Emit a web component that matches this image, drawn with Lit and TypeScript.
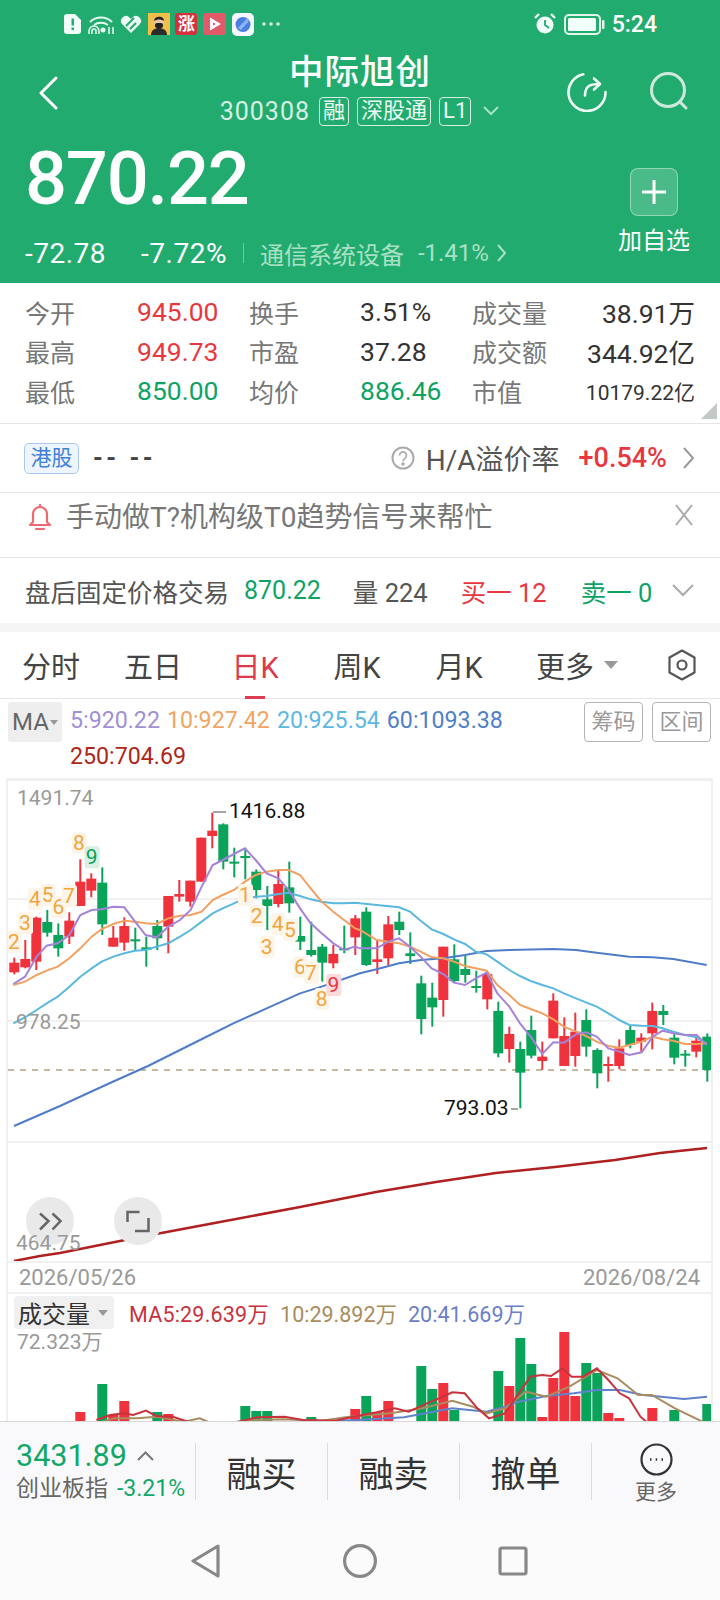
import { LitElement, html, css, svg } from 'lit';
import { customElement } from 'lit/decorators.js';

const RED = '#f0323c';
const GREEN = '#0aa35a';

// candle x position for a given index
const cx = (i: number) => 14.3 + 11 * i;

// [colour, wick top, body top, body bottom, wick bottom], read off the chart
type Candle = [string, number, number, number, number];

const leftCandles: Candle[] = [
  ['r', 533, 548, 577, 583], ['r', 480, 537, 562, 565], ['r', 410, 413, 545, 570], ['g', 390, 426, 458, 470],
  ['g', 430, 465, 505, 530], ['r', 397, 422, 470, 492], ['r', 238, 305, 378, 378], ['r', 280, 296, 332, 352],
  ['g', 262, 308, 433, 465], ['r', 438, 473, 500, 500], ['r', 412, 438, 488, 512], ['g', 443, 478, 482, 512],
  ['g', 470, 502, 510, 560], ['g', 420, 438, 475, 510], ['r', 348, 348, 440, 520], ['r', 300, 342, 350, 365],
  ['r', 302, 302, 365, 380], ['r', 173, 173, 305, 305], ['r', 98, 152, 168, 205], ['g', 130, 133, 245, 268],
  ['g', 203, 245, 250, 292], ['g', 205, 228, 232, 298], ['g', 268, 275, 330, 355], ['g', 318, 358, 378, 450],
  ['r', 272, 312, 372, 382], ['g', 245, 322, 370, 398], ['g', 410, 468, 485, 510], ['g', 425, 510, 525, 530],
  ['g', 492, 500, 548, 605], ['r', 495, 522, 550, 565], ['g', 437, 505, 510, 520], ['r', 405, 415, 472, 525],
];

const rightCandles: Candle[] = [
  ['g', 22, 35, 195, 198], ['r', 120, 178, 186, 222], ['r', 48, 73, 175, 195], ['g', 35, 65, 90, 105],
  ['g', 97, 160, 168, 192], ['g', 227, 250, 357, 403], ['g', 248, 293, 322, 380], ['r', 140, 140, 300, 350],
  ['g', 133, 178, 243, 248], ['g', 167, 207, 225, 248], ['g', 212, 258, 264, 278], ['r', 215, 222, 298, 328],
  ['g', 305, 333, 460, 472], ['r', 380, 402, 447, 488], ['g', 425, 447, 518, 625], ['g', 347, 390, 467, 475],
  ['r', 425, 470, 483, 510], ['r', 280, 302, 415, 415], ['r', 352, 408, 498, 498], ['r', 338, 395, 468, 500],
  ['g', 328, 360, 440, 470], ['g', 445, 450, 520, 565], ['r', 470, 492, 498, 545], ['r', 418, 445, 498, 508],
  ['g', 378, 390, 435, 445], ['r', 400, 413, 425, 455], ['r', 308, 333, 400, 448], ['g', 315, 333, 345, 375],
  ['g', 400, 413, 473, 493], ['g', 450, 461, 466, 500], ['r', 410, 422, 455, 472], ['g', 400, 410, 510, 545],
];

const candles: { c: string; t: number; bt: number; bb: number; b: number }[] = [
  ...leftCandles.map(([c, t, bt, bb, b]) => ({ c, t: 780 + t / 3, bt: 780 + bt / 3, bb: 780 + bb / 3, b: 780 + b / 3 })),
  ...rightCandles.map(([c, t, bt, bb, b]) => ({ c, t: 900 + t / 3, bt: 900 + bt / 3, bb: 900 + bb / 3, b: 900 + b / 3 })),
];

const ptsL = (a: number[][]) => a.map(([x, y]) => `${x / 3},${780 + y / 3}`).join(' ');
const ptsR = (a: number[][]) => a.map(([x, y]) => `${360 + x / 3},${900 + y / 3}`).join(' ');

const ma5 = ptsL([[40,612],[75,590],[110,530],[140,497],[173,490],[208,465],[241,405],[275,390],[305,388],[340,380],[373,382],[405,425],[437,465],[470,472],[505,440],[540,420],[572,390],[605,320],[638,255],[668,240],[702,222],[735,205],[767,240],[800,280],[835,295],[866,330],[900,385],[932,430],[965,460],[1000,490],[1032,510],[1065,500]])
  + ' ' + ptsR([[0,145],[50,145],[85,125],[117,115],[150,140],[182,170],[215,205],[250,222],[282,248],[315,255],[347,235],[380,218],[412,280],[448,320],[480,370],[512,410],[547,462],[580,427],[612,428],[648,403],[678,397],[710,410],[745,445],[778,455],[808,465],[845,457],[878,410],[908,392],[940,400],[975,405],[1010,405],[1040,435]]);

const ma10 = ptsL([[40,615],[75,605],[110,585],[140,572],[173,560],[208,535],[241,505],[275,470],[305,447],[340,432],[373,422],[405,425],[437,430],[470,432],[505,415],[540,407],[572,405],[605,395],[638,360],[668,345],[702,330],[735,305],[767,285],[800,275],[835,270],[866,270],[900,285],[932,325],[965,365],[1000,395],[1032,420],[1065,445]])
  + ' ' + ptsR([[0,90],[50,120],[85,125],[117,130],[150,140],[182,155],[215,172],[250,175],[282,185],[315,198],[347,205],[380,212],[412,255],[448,285],[480,315],[512,327],[547,340],[580,358],[612,380],[648,395],[678,408],[710,425],[745,438],[778,443],[808,435],[845,425],[878,410],[908,418],[940,422],[975,432],[1010,432],[1040,430]]);

const ma20 = ptsL([[40,730],[75,712],[110,690],[140,670],[173,650],[208,620],[241,590],[275,565],[305,545],[340,530],[373,520],[405,512],[437,510],[470,500],[505,490],[540,470],[572,450],[605,425],[638,400],[668,385],[702,370],[735,355],[767,350],[800,348],[835,342],[866,338],[900,348],[932,358],[965,365],[1000,370],[1032,370],[1065,368]])
  + ' ' + ptsR([[0,10],[50,15],[117,22],[150,35],[182,62],[215,88],[250,102],[282,118],[315,132],[347,155],[380,163],[412,185],[448,210],[480,228],[512,243],[547,255],[580,265],[612,280],[648,295],[678,307],[710,320],[745,340],[778,360],[808,375],[845,377],[878,378],[908,385],[940,395],[975,405],[1010,412],[1040,432]]);

const ma60 = '14,1126 60,1106 110,1083 148,1066 202,1039 ' + ptsL([[700,730],[800,685],[900,640],[965,620],[1080,580]])
  + ' ' + ptsR([[0,220],[50,208],[117,190],[182,180],[250,175],[315,165],[380,153],[448,150],[580,147],[648,150],[710,158],[808,170],[878,172],[940,177],[1040,195]]);

const ma250 = '14,1261 40,1256 60,1253 140,1237 220,1222 300,1207 376,1192 436,1182 496,1173 555,1167 615,1160 660,1153 707,1148';

// TD sequence marks: [text, x, y, tone]
const marks: [string, number, number, string][] = [
  ['2',42,485,'o'],['3',75,430,'o'],['4',105,358,'o'],['5',143,345,'o'],['6',175,382,'o'],['7',207,348,'o'],['8',237,190,'o'],['9',275,232,'g'],
  ['1',735,345,'o'],['2',770,408,'o'],['3',800,500,'o'],['4',833,432,'o'],['5',870,450,'o'],['6',900,562,'o'],['7',933,578,'o'],['8',965,657,'o'],['9',1000,615,'r'],
];

// volume bars, index + top in real pixels
const bars: [number, string, number][] = [
  [6,'r',1412],[8,'g',1384],[9,'r',1415],[10,'r',1401],[13,'g',1412],[14,'r',1414],[21,'g',1406],[22,'g',1411],[23,'g',1411],[27,'g',1417],
  [31,'r',1409],[32,'g',1396],[33,'r',1412],[34,'r',1401],[37,'g',1366],[38,'g',1389],[39,'r',1383],[40,'g',1410],[44,'g',1371],[45,'r',1386],
  [46,'g',1338],[47,'g',1364],[48,'r',1417],[49,'r',1378],[50,'r',1332],[51,'r',1396],[52,'g',1363],[53,'g',1373],[54,'r',1413],[55,'r',1418],
  [58,'r',1408],[60,'g',1410],[63,'g',1404],
];

const ptsV = (a: number[][]) => a.map(([x, y]) => `${x / 2.178},${1160 + y / 3}`).join(' ');
const volMa5 = ptsV([[210,780],[240,765],[270,760],[290,765],[318,752],[340,768],[380,772],[420,790],[520,785],[560,772],[620,770],[660,780],[730,782],[770,770],[820,757],[860,745],[890,755],[930,730],[965,710],[985,697],[1012,700],[1040,745],[1065,775],[1100,760],[1130,700],[1155,650],[1180,645],[1200,648],[1225,625],[1245,650],[1270,650],[1300,625],[1325,660],[1350,700],[1370,715],[1395,770],[1420,800]]);
const volMa10 = ptsV([[210,790],[250,775],[300,775],[340,770],[400,785],[435,775],[470,795],[540,780],[620,778],[700,782],[760,770],[850,760],[920,745],[985,722],[1030,740],[1060,760],[1100,745],[1145,695],[1190,710],[1240,680],[1300,630],[1345,655],[1390,705],[1420,705],[1470,745],[1530,785]]);
const volMa20 = ptsV([[560,790],[640,785],[780,780],[880,772],[985,745],[1060,755],[1100,740],[1130,725],[1190,708],[1250,700],[1300,690],[1350,690],[1400,705],[1490,717],[1540,710]]);

const stats = [
  ['今开', '945.00', 'up', '换手', '3.51%', '', '成交量', '38.91万', ''],
  ['最高', '949.73', 'up', '市盈', '37.28', '', '成交额', '344.92亿', ''],
  ['最低', '850.00', 'down', '均价', '886.46', 'down', '市值', '10179.22亿', 'small'],
];

@customElement('app-root')
export class AppRoot extends LitElement {
  static styles = css`
    :host {
      display: block;
      width: 720px;
      height: 1600px;
      overflow: hidden;
      background: #fff;
      color: #333;
      font-family: Roboto, "Noto Sans CJK SC", sans-serif;
    }

    /* header */
    .head { background: #22ab6e; color: #fff; height: 283px; }
    .status { height: 48px; display: flex; align-items: center; padding: 0 63px 0 64px; }
    .status-left { display: flex; align-items: center; gap: 5.600px; flex: 1; }
    .status-right { display: flex; align-items: center; gap: 8px; }
    .app-ic { width: 22px; height: 22px; display: flex; align-items: center; justify-content: center; border-radius: 3px; }
    .zhang { background: #d6303d; font-size: 17px; font-weight: 700; line-height: 22px; }
    .time { font-size: 23px; font-weight: 500; margin-left: -1px; }

    .nav { height: 82px; display: grid; grid-template-columns: 1fr auto 1fr; }
    .back { padding: 28px 0 0 38px; }
    .mid { display: flex; flex-direction: column; align-items: center; padding-top: 3px; }
    .name { font-size: 34.500px; line-height: 42px; font-weight: 500; letter-spacing: 1px; }
    .code-row { display: flex; align-items: center; gap: 8px; height: 34px; margin-top: 1px; }
    .code { font-size: 25px; letter-spacing: 1px; color: #d6f0e3; margin-right: 1px; }
    .tag { border: 1px solid #d6f0e3; border-radius: 4px; height: 27px; padding: 0 3px; font-size: 22px; line-height: 26px; color: #eafaf2; }
    .actions { display: flex; justify-content: flex-end; gap: 43px; padding: 24px 30px 0 0; align-items: flex-start; }

    .quote { height: 153px; box-sizing: border-box; padding: 2px 30px 0 25px; display: flex; justify-content: space-between; }
    .price { font-size: 74px; line-height: 94px; font-weight: 500; letter-spacing: -1.200px; }
    .delta { display: flex; align-items: center; height: 28px; margin-top: 13px; font-size: 28px; }
    .delta .num { letter-spacing: 0.500px; }
    .delta .pct { margin-left: 35px; }
    .delta .sep { width: 1px; height: 20px; background: rgba(255, 255, 255, 0.35); margin: 0 16px; }
    .delta .sector { font-size: 24px; color: #a9e0c6; }
    .delta .sector-pct { font-size: 24px; color: #a9e0c6; margin: 0 7px 0 14px; }
    .add { display: flex; flex-direction: column; align-items: center; padding-top: 36px; width: 72px; }
    .add-btn {
      width: 48px; height: 48px; box-sizing: border-box; border: 1px solid rgba(255, 255, 255, 0.4); border-radius: 8px;
      background: rgba(255, 255, 255, 0.18); display: flex; align-items: center; justify-content: center;
    }
    .add-label { font-size: 24px; line-height: 30px; margin-top: 10px; white-space: nowrap; }

    /* stats */
    .stats {
      position: relative; height: 141px; padding: 9px 25px 0; box-sizing: border-box;
      display: grid; grid-template-columns: 112px 112px 111px 112px 90px 1fr; grid-auto-rows: 39.500px; align-items: center;
      font-size: 26.500px; border-bottom: 1px solid #e6e6e6;
    }
    .lbl { color: #777; font-size: 25px; white-space: nowrap; }
    .val { color: #333; }
    .up { color: #e8373f; }
    .down { color: #0ea365; }
    .end { text-align: right; white-space: nowrap; }
    .small { font-size: 21px; }
    .corner {
      position: absolute; right: 3px; bottom: 4px; width: 0; height: 0;
      border-left: 16px solid transparent; border-bottom: 16px solid #c4c8c8;
    }

    .hk { height: 68px; display: flex; align-items: center; padding: 0 25px 0 24px; border-bottom: 1px solid #e6e6e6; }
    .hk-chip {
      width: 55px; height: 31px; box-sizing: border-box; border: 1px solid #a9c8ee; border-radius: 5px; background: #eef5fe;
      color: #3f80d8; font-size: 21px; line-height: 29px; text-align: center;
    }
    .dash { margin-left: 14px; font-size: 25px; font-weight: 700; letter-spacing: 3.500px; color: #444; flex: 1; }
    .ha { font-size: 28px; color: #555; margin: 0 19px 0 11px; }
    .prem { font-size: 27px; font-weight: 500; color: #e8373f; margin-right: 15px; }

    .promo { height: 65px; display: flex; padding: 11px 27px 0 28px; box-sizing: border-box; border-bottom: 1px solid #e6e6e6; }
    .promo-text { font-size: 28px; line-height: 27px; margin-left: 14px; color: #777; flex: 1; }

    .trade { height: 65px; display: flex; align-items: center; padding: 0 26px 0 25px; font-size: 25.500px; color: #555; box-sizing: border-box; }
    .trade .price-t { margin-left: 15px; font-size: 25px; }
    .trade .vol { margin-left: 32px; }
    .trade .buy { margin-left: 33px; }
    .trade .sell { margin-left: 34px; flex: 1; }

    .band { height: 9px; background: #f5f5f5; }

    /* period tabs */
    .tabs {
      height: 67px; box-sizing: border-box; border-bottom: 1px solid #e6e6e6;
      display: grid; grid-template-columns: repeat(5, 102px) 102px 1fr; grid-template-rows: 100%; font-size: 29px; color: #444;
    }
    .tab { display: flex; align-items: center; justify-content: center; position: relative; white-space: nowrap; }
    .tab.active { color: #e0384a; }
    .tab.active::after { content: ""; position: absolute; left: 41px; width: 20px; bottom: -1px; height: 3px; background: #dc3c55; }
    .tab.more { justify-content: flex-start; padding-left: 26px; gap: 10px; }
    .caret { width: 0; height: 0; border-left: 7px solid transparent; border-right: 7px solid transparent; border-top: 8px solid #999; }
    .tab-set { display: flex; align-items: center; justify-content: flex-end; padding-right: 24px; }

    /* MA legend */
    .ma { height: 79px; display: flex; padding: 3px 9px 0 8px; box-sizing: border-box; }
    .ma-chip {
      width: 54px; height: 40px; background: #eee; border-radius: 3px; color: #666; font-size: 24px; flex: none;
      display: flex; align-items: center; justify-content: center; gap: 1px;
    }
    .ma-chip .caret { border-left-width: 4px; border-right-width: 4px; border-top-width: 5px; }
    .legend { flex: 1; display: flex; flex-wrap: wrap; align-content: flex-start; gap: 0 7px; margin-left: 8px; font-size: 23.200px; line-height: 36px; }
    .box-btns { display: flex; gap: 9px; }
    .box-btn {
      width: 59px; height: 40px; box-sizing: border-box; border: 1px solid #b4b4b4; border-radius: 4px;
      color: #999; font-size: 22px; line-height: 38px; text-align: center;
    }

    /* charts */
    .frame { margin: 0 7px 0 6px; border: 2px solid #f0f0f0; border-top-width: 3px; border-bottom: 0; height: 640px; overflow: hidden; }
    svg.plot { display: block; width: 703px; }
    svg.plot text { font-family: Roboto, "Noto Sans CJK SC", sans-serif; }
    .dates {
      height: 33px; box-sizing: border-box; border-top: 2px solid #f0f0f0; border-bottom: 2px solid #f0f0f0;
      display: flex; justify-content: space-between; align-items: center; padding: 0 11px; color: #999; font-size: 22px;
    }
    .vol-head { height: 37px; display: flex; align-items: center; padding-left: 6px; font-size: 21.500px; }
    .vol-chip {
      width: 100px; height: 33px; box-sizing: border-box; background: #f0f0f0; border-radius: 4px; color: #333; font-size: 24px;
      display: flex; align-items: center; padding-left: 4px; gap: 8px; margin-right: 15px; flex: none;
    }
    .vol-chip .caret { border-left-width: 5px; border-right-width: 5px; border-top-width: 6px; }
    .vol-head span.v { margin-right: 11px; white-space: nowrap; }
    .vol-head span.wide { letter-spacing: 0.200px; }

    /* bottom bar */
    .bar { height: 100px; box-sizing: border-box; background: #f9f9fb; border-top: 1px solid #d8d8d8; display: flex; align-items: center; }
    .index { width: 195px; box-sizing: border-box; padding: 0 0 0 16px; }
    .index-top { display: flex; align-items: center; gap: 10px; font-size: 30.500px; line-height: 34px; color: #10a868; }
    .index-sub { display: flex; align-items: center; gap: 9px; font-size: 23px; line-height: 32px; color: #666; }
    .index-sub b { font-weight: 400; font-size: 23px; color: #10a868; }
    .act { width: 131px; height: 57px; border-left: 1px solid #dcdcdc; display: flex; align-items: center; justify-content: center; font-size: 35px; color: #333; }
    .act-more { flex: 1; height: 57px; border-left: 1px solid #dcdcdc; display: flex; flex-direction: column; align-items: center; font-size: 21px; color: #666; }
    .act-more svg { flex: none; }
    .act-more span { line-height: 26px; margin-top: 3px; }
    .sysnav { height: 79px; background: #fbfbfb; display: flex; align-items: center; justify-content: center; gap: 121px; padding-right: 2px; }
  `;

  private renderKline() {
    return html`
      <svg class="plot" style="height:480px" viewBox="8 781 703 480">
        ${[899, 1021, 1142].map((y) => svg`<line x1="8" x2="711" y1=${y} y2=${y} stroke="#f0f0f0" stroke-width="2"></line>`)}
        <line x1="8" x2="711" y1="1070" y2="1070" stroke="#c9b79f" stroke-width="2" stroke-dasharray="6 6"></line>

        ${candles.map((k, i) => {
          const fill = k.c === 'r' ? RED : GREEN;
          return svg`
            <rect x=${cx(i) - 1} y=${k.t} width="2" height=${k.b - k.t} fill=${fill}></rect>
            <rect x=${cx(i) - 5} y=${k.bt} width="10" height=${Math.max(k.bb - k.bt, 2)} fill=${fill}></rect>`;
        })}

        <polyline points=${ma60} fill="none" stroke="#4f7cc8" stroke-width="2"></polyline>
        <polyline points=${ma20} fill="none" stroke="#5ab8e0" stroke-width="2"></polyline>
        <polyline points=${ma10} fill="none" stroke="#f0a060" stroke-width="2"></polyline>
        <polyline points=${ma5} fill="none" stroke="#a583d9" stroke-width="2"></polyline>
        <polyline points=${ma250} fill="none" stroke="#b02020" stroke-width="2.500"></polyline>

        ${marks.map(([t, x, y, tone]) => {
          const bg = tone === 'g' ? '#d8efe2' : tone === 'r' ? '#fbd9dc' : '#fdf5ea';
          const fg = tone === 'g' ? '#0aa35a' : tone === 'r' ? '#e8373f' : '#f0a63c';
          return svg`
            <rect x=${x / 3 - 7} y=${780 + y / 3 - 11} width="15" height="22" rx="3" fill=${bg}></rect>
            <text x=${x / 3} y=${780 + y / 3 + 7} text-anchor="middle" font-size="21" fill=${fg}>${t}</text>`;
        })}

        <line x1="213" x2="226" y1="812" y2="812" stroke="#888" stroke-width="1.500"></line>
        <text x="229" y="818" font-size="21" fill="#111">1416.88</text>
        <text x="444" y="1115" font-size="21" fill="#111">793.03</text>
        <line x1="511" x2="518" y1="1109" y2="1109" stroke="#888" stroke-width="1.500"></line>

        <text x="17" y="805" font-size="21" fill="#999">1491.74</text>
        <text x="16" y="1029" font-size="21" fill="#999">978.25</text>

        <circle cx="50" cy="1221" r="24" fill="#e9e9e9"></circle>
        <path d="M40 1213.500l8.500 7.500-8.500 8.500M52.500 1213.500l8 7.500-8 8.500" fill="none" stroke="#666" stroke-width="2.500"></path>
        <circle cx="138" cy="1221" r="24" fill="#e9e9e9"></circle>
        <path d="M127.500 1222v-10h12M148.500 1218v13h-13.500" fill="none" stroke="#666" stroke-width="2.500"></path>
        <text x="16" y="1250" font-size="21" fill="#999">464.75</text>
      </svg>`;
  }

  private renderVolume() {
    return html`
      <svg class="plot" style="height:90px" viewBox="8 1331 703 90">
        ${bars.map(([i, c, top]) => svg`<rect x=${cx(i) - 5} y=${top} width="10" height=${1425 - top} fill=${c === 'r' ? RED : GREEN}></rect>`)}
        <polyline points=${volMa20} fill="none" stroke="#5f82cc" stroke-width="2"></polyline>
        <polyline points=${volMa10} fill="none" stroke="#a98c5e" stroke-width="2"></polyline>
        <polyline points=${volMa5} fill="none" stroke="#c8323c" stroke-width="2"></polyline>
        <text x="17" y="1349" font-size="21" fill="#999">72.323万</text>
      </svg>`;
  }

  render() {
    return html`
      <div class="head">
        <div class="status">
          <div class="status-left">
            <svg width="17" height="20" viewBox="0 0 17 20">
              <path d="M3 0h8l6 6v11a3 3 0 0 1-3 3H3a3 3 0 0 1-3-3V3a3 3 0 0 1 3-3z" fill="#f2fff9"></path>
              <rect x="7.500" y="4.500" width="2.500" height="7" fill="#22ab6e"></rect>
              <rect x="7.500" y="13.500" width="2.500" height="2.500" fill="#22ab6e"></rect>
            </svg>
            <svg width="28" height="22" viewBox="0 0 28 22" fill="none" stroke="#e8fbf1" stroke-width="2">
              <path d="M3 9c6-6 16-6 22 0M7 12c4-3 10-3 14 0"></path>
              <path d="M2 21v-3a5 5 0 0 1 10 0v3M5 21v-3a2 2 0 0 1 4 0v3" stroke-width="1.500"></path>
              <circle cx="16" cy="17" r="1.500" fill="#e8fbf1"></circle>
              <path d="M22 14v7M26 14v7" stroke-width="1.500"></path>
            </svg>
            <svg width="22" height="18" viewBox="0 0 22 18">
              <path d="M11 18L2 9a5 5 0 0 1 7-7l2 2 2-2a5 5 0 0 1 7 7z" fill="#eafcf3"></path>
              <path d="M6 11l8-8M10 14l6-6" stroke="#22ab6e" stroke-width="2"></path>
            </svg>
            <svg width="22" height="22" viewBox="0 0 22 22">
              <rect width="22" height="22" fill="#f0c04a"></rect>
              <path d="M3 22c0-5 4-7 8-7s8 2 8 7z" fill="#2c2c2c"></path>
              <circle cx="11" cy="9" r="5" fill="#e8c8a8"></circle>
              <path d="M6 8c0-5 10-6 10 0-3-2-7-2-10 0z" fill="#2a2020"></path>
              <rect x="7" y="10" width="8" height="5" rx="2" fill="#222"></rect>
            </svg>
            <span class="app-ic zhang">涨</span>
            <svg width="23" height="22" viewBox="0 0 23 22">
              <rect width="23" height="22" rx="3" fill="#e05a6a"></rect>
              <path d="M7 4.500l11 6.500-11 6.500zM10 9.500v3l3-1.500z" fill="#fff" fill-rule="evenodd"></path>
            </svg>
            <svg width="22" height="23" viewBox="0 0 22 23">
              <rect width="22" height="23" rx="5" fill="#f4f8ff"></rect>
              <circle cx="11" cy="11.500" r="7.500" fill="#4a7ee0"></circle>
              <path d="M6 15L15 5.500l2 2.500-8 9z" fill="#8fb2f2"></path>
            </svg>
            <svg width="18" height="4" viewBox="0 0 18 4" style="margin-left:3px" fill="#d6f0e3">
              <circle cx="2" cy="2" r="1.800"></circle><circle cx="9" cy="2" r="1.800"></circle><circle cx="16" cy="2" r="1.800"></circle>
            </svg>
          </div>
          <div class="status-right">
            <svg width="22" height="22" viewBox="0 0 22 22">
              <circle cx="11" cy="12" r="8.500" fill="#f2fff9"></circle>
              <path d="M11 7v5l4 3" stroke="#22ab6e" stroke-width="1.800" fill="none"></path>
              <path d="M1 5l4-4M21 5l-4-4" stroke="#f2fff9" stroke-width="2.400"></path>
            </svg>
            <svg width="41" height="21" viewBox="0 0 41 21">
              <rect x="1" y="1" width="35" height="19" rx="4" fill="none" stroke="#e2f6ec" stroke-width="2"></rect>
              <rect x="4" y="4" width="28" height="13" rx="1.500" fill="#f2fff9"></rect>
              <rect x="38" y="6" width="2.500" height="9" rx="1" fill="#e2f6ec"></rect>
            </svg>
            <span class="time">5:24</span>
          </div>
        </div>

        <div class="nav">
          <div class="back">
            <svg width="20" height="34" viewBox="0 0 20 34" fill="none" stroke="#fff" stroke-width="3" stroke-linecap="round" stroke-linejoin="round">
              <path d="M18 2L3 17l15 15"></path>
            </svg>
          </div>
          <div class="mid">
            <div class="name">中际旭创</div>
            <div class="code-row">
              <span class="code">300308</span>
              <span class="tag">融</span>
              <span class="tag">深股通</span>
              <span class="tag">L1</span>
              <svg width="18" height="10" viewBox="0 0 18 10" fill="none" stroke="#a9e0c6" stroke-width="2" style="margin-left:3px">
                <path d="M2 1l7 7 7-7"></path>
              </svg>
            </div>
          </div>
          <div class="actions">
            <svg width="40" height="40" viewBox="0 0 40 40" fill="none" stroke="#eefcf5" stroke-width="2.600" stroke-linecap="round" stroke-linejoin="round">
              <path d="M16.300 2.300A18.500 18.500 0 1 0 38.500 20"></path>
              <path d="M18 23.500C18 15 22 12 32 12M27 6.500l6 5.500-6 5.500"></path>
            </svg>
            <svg width="40" height="40" viewBox="0 0 40 40" fill="none" stroke="#cfe8dc" stroke-width="3" stroke-linecap="round">
              <circle cx="18" cy="18" r="16.500"></circle>
              <path d="M30 30l6 6"></path>
            </svg>
          </div>
        </div>

        <div class="quote">
          <div>
            <div class="price">870.22</div>
            <div class="delta">
              <span class="num">-72.78</span>
              <span class="num pct">-7.72%</span>
              <span class="sep"></span>
              <span class="sector">通信系统设备</span>
              <span class="sector-pct">-1.41%</span>
              <svg width="11" height="18" viewBox="0 0 11 18" fill="none" stroke="#a9e0c6" stroke-width="2"><path d="M2 1l7 8-7 8"></path></svg>
            </div>
          </div>
          <div class="add">
            <div class="add-btn">
              <svg width="26" height="26" viewBox="0 0 26 26" stroke="#fff" stroke-width="3"><path d="M13 1v24M1 13h24"></path></svg>
            </div>
            <div class="add-label">加自选</div>
          </div>
        </div>
      </div>

      <div class="stats">
        ${stats.map((r) => html`
          <span class="lbl">${r[0]}</span><span class="val ${r[2]}">${r[1]}</span>
          <span class="lbl">${r[3]}</span><span class="val ${r[5]}">${r[4]}</span>
          <span class="lbl">${r[6]}</span><span class="val end ${r[8]}">${r[7]}</span>`)}
        <span class="corner"></span>
      </div>

      <div class="hk">
        <span class="hk-chip">港股</span>
        <span class="dash">-- --</span>
        <svg width="24" height="24" viewBox="0 0 24 24" fill="none" stroke="#aaa" stroke-width="2">
          <circle cx="12" cy="12" r="10.500"></circle>
          <path d="M8.500 9.500a3.500 3.500 0 1 1 5.500 2.800c-1.300.9-2 1.500-2 3" stroke-width="1.600"></path>
          <circle cx="12" cy="18" r="0.800"></circle>
        </svg>
        <span class="ha">H/A溢价率</span>
        <span class="prem">+0.54%</span>
        <svg width="13" height="24" viewBox="0 0 13 24" fill="none" stroke="#999" stroke-width="2"><path d="M2 2l9 10-9 10"></path></svg>
      </div>

      <div class="promo">
        <svg width="24" height="27" viewBox="0 0 24 27" fill="none" stroke="#ec6a74" stroke-width="2.200" stroke-linejoin="round">
          <path d="M12 3a7 7 0 0 1 7 7v8l3 3H2l3-3v-8a7 7 0 0 1 7-7z"></path>
          <path d="M12 1v2M8 25h8" stroke-linecap="round"></path>
        </svg>
        <span class="promo-text">手动做T?机构级T0趋势信号来帮忙</span>
        <svg width="18" height="22" viewBox="0 0 18 22" fill="none" stroke="#aaa" stroke-width="2"><path d="M1 1l16 20M17 1L1 21"></path></svg>
      </div>

      <div class="trade">
        <span>盘后固定价格交易</span>
        <span class="price-t down">870.22</span>
        <span class="vol">量 224</span>
        <span class="buy up">买一 12</span>
        <span class="sell down">卖一 0</span>
        <svg width="22" height="13" viewBox="0 0 22 13" fill="none" stroke="#aaa" stroke-width="2"><path d="M1 1l10 10L21 1"></path></svg>
      </div>

      <div class="band"></div>

      <div class="tabs">
        <div class="tab">分时</div>
        <div class="tab">五日</div>
        <div class="tab active">日K</div>
        <div class="tab">周K</div>
        <div class="tab">月K</div>
        <div class="tab more">更多<span class="caret"></span></div>
        <div class="tab-set">
          <svg width="28" height="32" viewBox="0 0 28 32" fill="none" stroke="#555" stroke-width="2.200" stroke-linejoin="round">
            <path d="M14 1.500L26.500 8.500v15L14 30.500 1.500 23.500v-15z"></path>
            <circle cx="14" cy="16" r="4.500"></circle>
          </svg>
        </div>
      </div>

      <div class="ma">
        <div class="ma-chip">MA<span class="caret"></span></div>
        <div class="legend">
          <span style="color:#a18fd8">5:920.22</span>
          <span style="color:#f0a562">10:927.42</span>
          <span style="color:#5cb8e2">20:925.54</span>
          <span style="color:#4f80c8">60:1093.38</span>
          <span style="color:#b02518">250:704.69</span>
        </div>
        <div class="box-btns">
          <div class="box-btn">筹码</div>
          <div class="box-btn">区间</div>
        </div>
      </div>

      <div class="frame">
        ${this.renderKline()}
        <div class="dates"><span>2026/05/26</span><span>2026/08/24</span></div>
        <div class="vol-head">
          <div class="vol-chip">成交量<span class="caret"></span></div>
          <span class="v wide" style="color:#c8323c">MA5:29.639万</span>
          <span class="v" style="color:#a98c5e">10:29.892万</span>
          <span class="v" style="color:#6a80c8">20:41.669万</span>
        </div>
        ${this.renderVolume()}
      </div>

      <div class="bar">
        <div class="index">
          <div class="index-top">3431.89
            <svg width="17" height="10" viewBox="0 0 17 10" fill="none" stroke="#777" stroke-width="2"><path d="M1 9l7.500-7.500L16 9"></path></svg>
          </div>
          <div class="index-sub">创业板指<b>-3.21%</b></div>
        </div>
        <div class="act">融买</div>
        <div class="act">融卖</div>
        <div class="act">撤单</div>
        <div class="act-more">
          <svg width="33" height="33" viewBox="0 0 33 33" fill="none" stroke="#333" stroke-width="2.200">
            <circle cx="16.500" cy="16.500" r="15"></circle>
            <path d="M10 16.500h1.500M15.700 16.500h1.500M21.500 16.500h1.500" stroke-width="2.500"></path>
          </svg>
          <span>更多</span>
        </div>
      </div>

      <div class="sysnav">
        <svg width="32" height="34" viewBox="0 0 32 34" fill="none" stroke="#888" stroke-width="3.200" stroke-linejoin="round">
          <path d="M28 2L3 17l25 15z"></path>
        </svg>
        <svg width="34" height="34" viewBox="0 0 34 34" fill="none" stroke="#888" stroke-width="3.200"><circle cx="17" cy="17" r="15.400"></circle></svg>
        <svg width="30" height="30" viewBox="0 0 30 30" fill="none" stroke="#888" stroke-width="3.200" stroke-linejoin="round"><rect x="2" y="2" width="26" height="26" rx="2"></rect></svg>
      </div>
    `;
  }
}
